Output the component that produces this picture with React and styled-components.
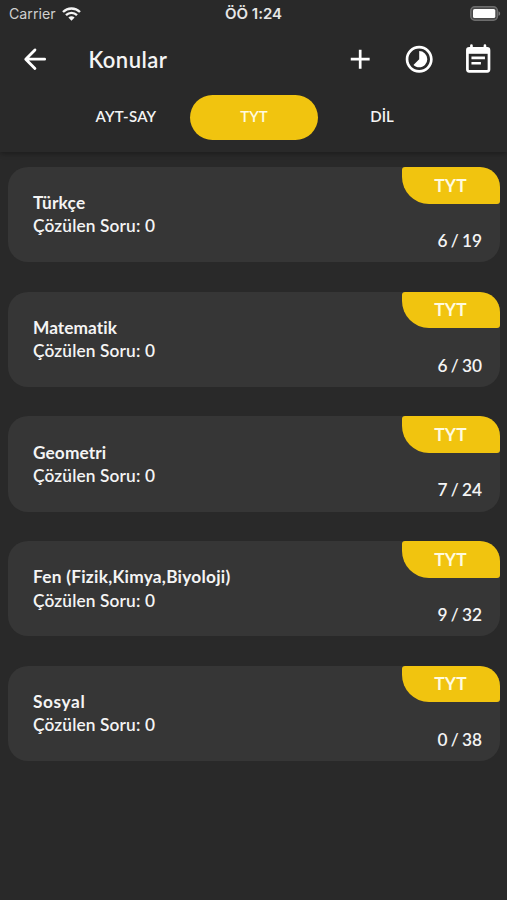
import React from "react";
import styled, { createGlobalStyle, css } from "styled-components";
import { MdAdd, MdTimelapse } from "react-icons/md";

const GlobalStyle = createGlobalStyle`
  *, *::before, *::after { box-sizing: border-box; }
  body { margin: 0; background: #292929; }
`;

const Screen = styled.div`
  width: 507px;
  height: 900px;
  overflow: hidden;
  display: flex;
  flex-direction: column;
  background: #292929;
  color: #f4f4f4;
  font-family: "Lato", "Open Sans", sans-serif;
  font-variant-ligatures: none;
  white-space: nowrap;
`;

const Header = styled.header`
  flex: none;
  height: 152px;
  background: #292929;
  box-shadow: 0 2px 5px rgba(0, 0, 0, 0.3);
`;

const StatusBar = styled.div`
  height: 27px;
  display: grid;
  grid-template-columns: 1fr auto 1fr;
  align-items: center;
  padding: 0 6px 0 9px;
  font-family: "Inter", sans-serif;
  color: #e6e6e6;
`;

const Carrier = styled.div`
  display: flex;
  align-items: center;
  gap: 6px;
  font-size: 14.2px;
  color: #cfcfcf;
`;

const Clock = styled.div`
  padding-right: 3px;
  font-size: 15px;
  font-weight: 600;
`;

const BatterySlot = styled.div`
  display: flex;
  justify-content: flex-end;
`;

const Toolbar = styled.div`
  height: 65px;
  display: flex;
  align-items: center;
  padding: 0 13px 0 19px;
`;

const IconButton = styled.button`
  display: flex;
  padding: 0;
  border: 0;
  background: none;
  color: #fff;
  font-size: 32.4px;
`;

const Title = styled.h1`
  flex: 1;
  margin: 0 0 0 37px;
  font-size: 22px;
  line-height: 30px;
  font-weight: 600;
  letter-spacing: 0.45px;
`;

const Actions = styled.div`
  display: flex;
  gap: 26.2px;
`;

const Tabs = styled.nav`
  display: flex;
  margin: 3px 0 0 62px;
`;

const Tab = styled.button`
  width: 128px;
  height: 45px;
  padding: 0 0 4px;
  border: 0;
  border-radius: 23px;
  background: none;
  color: #f4f4f4;
  font: 600 15px/20px "Lato", sans-serif;
  letter-spacing: ${(p) => p.$tracking || 0}px;
  ${(p) => p.$active && css`
    background: #f1c40f;
    color: #fffbe0;
  `}
`;

const List = styled.main`
  display: flex;
  flex-direction: column;
  gap: 29.4px;
  padding: 15px 7.5px 0 8px;
`;

const Card = styled.article`
  height: 95.3px;
  display: flex;
  justify-content: space-between;
  padding-left: 25px;
  border-radius: 20px;
  background: #363636;
`;

const Details = styled.div`
  padding-top: 24.2px;
  font-size: 17.3px;
  line-height: 23.3px;
`;

const Subject = styled.div`
  font-weight: 700;
  letter-spacing: ${(p) => p.$tracking}px;
`;

const Solved = styled.div`
  font-weight: 600;
  letter-spacing: 0.14px;
`;

const Side = styled.div`
  width: 98px;
  display: flex;
  flex-direction: column;
`;

const Badge = styled.div`
  height: 36.7px;
  display: flex;
  align-items: center;
  justify-content: center;
  padding-bottom: 0.6px;
  border-radius: 3px 20px 3px 27px;
  background: #f1c40f;
  color: #fffbe0;
  font-size: 17.3px;
  font-weight: 700;
  letter-spacing: 0.2px;
`;

const Progress = styled.div`
  margin-top: 25.2px;
  padding-right: 17.5px;
  text-align: right;
  font-size: 17.3px;
  line-height: 24px;
  font-weight: 600;
  word-spacing: -1px;
`;

const WifiIcon = () => (
  <svg width="19" height="14" viewBox="0 0 19 14" fill="none" stroke="#f4f4f4" strokeWidth="2.4">
    <path d="M1 5C5.8 .4 13.2 .4 18 5" />
    <path d="M4 8.1c3.1-3 7.9-3 11 0" />
    <path d="M9.5 13.7 6.4 10.5c1.8-1.6 4.4-1.6 6.2 0Z" fill="#f4f4f4" stroke="none" />
  </svg>
);

const BatteryIcon = () => (
  <svg width="31" height="15" viewBox="0 0 31 15">
    <rect x=".8" y=".8" width="26.6" height="13.4" rx="4" fill="#484848" stroke="#6d6d6d" strokeWidth="1.5" />
    <rect x="3" y="2.9" width="22.3" height="9.2" rx="1.6" fill="#fff" />
    <path d="M28.5 5.2c2.2.8 2.2 3.8 0 4.6Z" fill="#7a7a7a" />
  </svg>
);

const BackIcon = () => (
  <svg
    width="1em" height="1em" viewBox="0 0 24 24" fill="none"
    stroke="currentColor" strokeWidth="2.1" strokeLinecap="round" strokeLinejoin="round"
  >
    <path d="M19 12H5.3M11.8 5.1 5 12l6.8 6.9" />
  </svg>
);

const NoteIcon = () => (
  <svg width="1em" height="1em" viewBox="0 0 24 24" fill="none" stroke="currentColor" strokeWidth="2">
    <rect x="4" y="4" width="16" height="17" rx="1.3" />
    <path d="M4 4.5h16V8H4Z" fill="currentColor" stroke="none" />
    <path d="M7 4V2M17 4V2" strokeLinecap="round" />
    <path d="M7 11h10M7 15h7" />
  </svg>
);

const subjects = [
  { name: "Türkçe", tracking: 0.2, done: 6, total: 19 },
  { name: "Matematik", tracking: 0.06, done: 6, total: 30 },
  { name: "Geometri", tracking: 0.1, done: 7, total: 24 },
  { name: "Fen (Fizik,Kimya,Biyoloji)", tracking: 0.25, done: 9, total: 32 },
  { name: "Sosyal", tracking: 0.6, done: 0, total: 38 },
];

export default function App() {
  return (
    <Screen>
      <GlobalStyle />
      <Header>
        <StatusBar>
          <Carrier>Carrier <WifiIcon /></Carrier>
          <Clock>ÖÖ 1:24</Clock>
          <BatterySlot><BatteryIcon /></BatterySlot>
        </StatusBar>
        <Toolbar>
          <IconButton><BackIcon /></IconButton>
          <Title>Konular</Title>
          <Actions>
            <IconButton><MdAdd /></IconButton>
            <IconButton><MdTimelapse /></IconButton>
            <IconButton><NoteIcon /></IconButton>
          </Actions>
        </Toolbar>
        <Tabs>
          <Tab $tracking={0.25}>AYT-SAY</Tab>
          <Tab $active>TYT</Tab>
          <Tab>DİL</Tab>
        </Tabs>
      </Header>
      <List>
        {subjects.map((s) => (
          <Card key={s.name}>
            <Details>
              <Subject $tracking={s.tracking}>{s.name}</Subject>
              <Solved>Çözülen Soru: 0</Solved>
            </Details>
            <Side>
              <Badge>TYT</Badge>
              <Progress>{s.done} / {s.total}</Progress>
            </Side>
          </Card>
        ))}
      </List>
    </Screen>
  );
}
